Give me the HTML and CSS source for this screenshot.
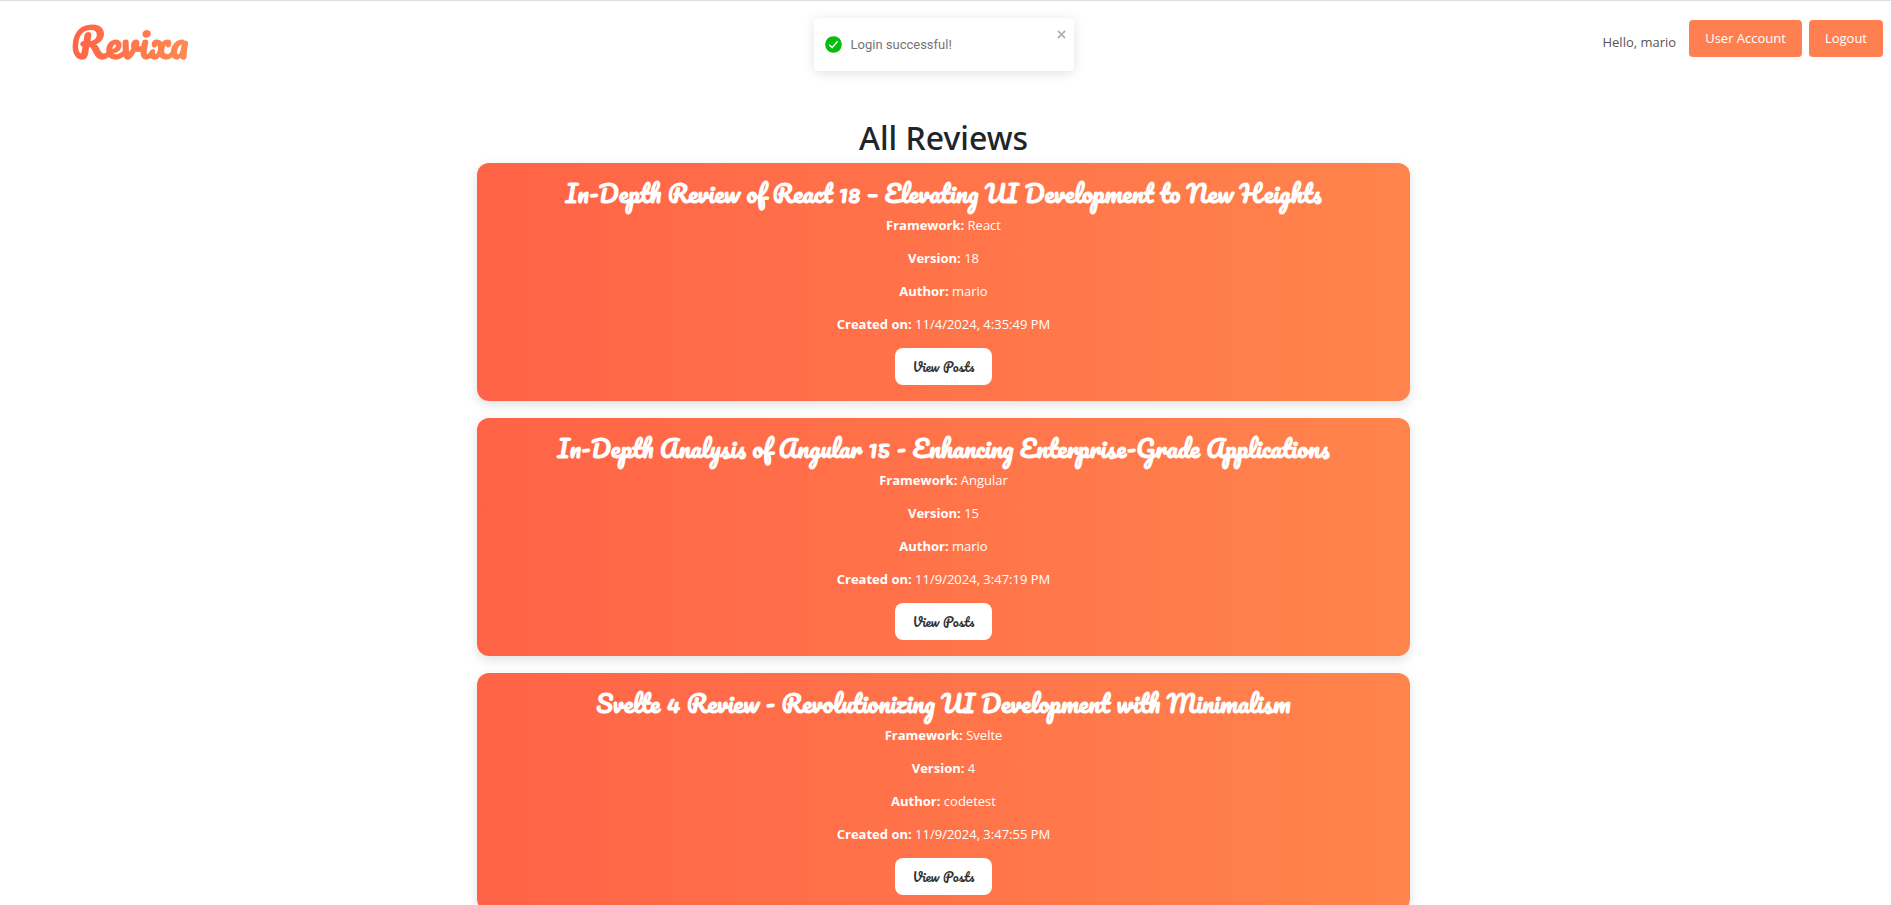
FILE: index.html
```html
<!DOCTYPE html>
<html lang="en">
<head>
  <meta charset="utf-8">
  <title>Revixa</title>
  <link rel="stylesheet" href="styles.css">
</head>
<body>
  <header class="topbar">
    <a class="brand" href="#">Revixa</a>
    <nav class="account">
      <span class="greeting">Hello, mario</span>
      <button class="btn" type="button">User Account</button>
      <button class="btn" type="button">Logout</button>
    </nav>
  </header>

  <div class="toast-layer">
    <div class="toast" role="status">
      <svg class="toast-icon" viewBox="0 0 18 18" aria-hidden="true">
        <circle cx="9" cy="9" r="8.8" fill="#07bc0c"/>
        <path d="M4.6 9.4 L7.6 12.2 L13.4 5.6" fill="none" stroke="#fff" stroke-width="1.5"/>
      </svg>
      <span class="toast-text">Login successful!</span>
      <button class="toast-close" type="button" aria-label="Close">
        <svg viewBox="0 0 10 10" aria-hidden="true"><path d="M1 1 L9 9 M9 1 L1 9" stroke="#b0b0b0" stroke-width="2"/></svg>
      </button>
    </div>
  </div>

  <main class="reviews">
    <h1 class="heading">All Reviews</h1>
    <article class="card">
      <h2 class="title">In-Depth Review of React 18 – Elevating UI Development to New Heights</h2>
      <p class="meta"><strong>Framework:</strong> React</p>
      <p class="meta"><strong>Version:</strong> 18</p>
      <p class="meta"><strong>Author:</strong> mario</p>
      <p class="meta"><strong>Created on:</strong> 11/4/2024, 4:35:49 PM</p>
      <button class="view" type="button">View Posts</button>
    </article>
    <article class="card">
      <h2 class="title">In-Depth Analysis of Angular 15 - Enhancing Enterprise-Grade Applications</h2>
      <p class="meta"><strong>Framework:</strong> Angular</p>
      <p class="meta"><strong>Version:</strong> 15</p>
      <p class="meta"><strong>Author:</strong> mario</p>
      <p class="meta"><strong>Created on:</strong> 11/9/2024, 3:47:19 PM</p>
      <button class="view" type="button">View Posts</button>
    </article>
    <article class="card">
      <h2 class="title">Svelte 4 Review - Revolutionizing UI Development with Minimalism</h2>
      <p class="meta"><strong>Framework:</strong> Svelte</p>
      <p class="meta"><strong>Version:</strong> 4</p>
      <p class="meta"><strong>Author:</strong> codetest</p>
      <p class="meta"><strong>Created on:</strong> 11/9/2024, 3:47:55 PM</p>
      <button class="view" type="button">View Posts</button>
    </article>
  </main>
</body>
</html>
```
FILE: styles.css
```css
* {
  box-sizing: border-box;
}

html {
  scrollbar-width: none;
}

body {
  margin: 0;
  border-top: 1px solid #dedede;
  background: #fff;
  color: #212529;
  font: 13px/21px "Segoe UI", "Open Sans", "Noto Sans", sans-serif;
}

.topbar {
  display: flex;
  align-items: flex-start;
  justify-content: space-between;
  height: 96px;
  padding: 19px 8px 0 71px;
}

.brand {
  padding-right: 6px;
  background: linear-gradient(to right, #ff6347, #ff8c50);
  background-clip: text;
  -webkit-background-clip: text;
  color: transparent;
  font: 700 40px/44px Pacifico, cursive;
  text-decoration: none;
}

.account {
  display: flex;
  align-items: center;
  gap: 7px;
}

.greeting {
  padding: 8px 6px 0 0;
  color: #555;
}

.btn {
  height: 37px;
  padding: 0 16px;
  border: 0;
  border-radius: 4px;
  background: #ff7f50;
  color: #fff;
  font: inherit;
}

.toast-layer {
  position: absolute;
  top: 18px;
  left: 0;
  right: 4px;
  display: flex;
  justify-content: center;
  pointer-events: none;
}

.toast {
  display: flex;
  align-items: center;
  gap: 9px;
  width: 260px;
  height: 53px;
  padding: 0 8px 0 11px;
  border-radius: 4px;
  background: #fff;
  box-shadow: 0 2px 12px rgba(0, 0, 0, 0.12);
  color: #757575;
  font: 13px/20px Roboto, sans-serif;
  pointer-events: auto;
}

.toast-icon {
  width: 17px;
  height: 17px;
}

.toast-text {
  flex: 1;
}

.toast-close {
  display: flex;
  align-self: flex-start;
  margin-top: 12px;
  padding: 0;
  border: 0;
  background: none;
}

.toast-close svg {
  width: 9px;
  height: 9px;
}

.reviews {
  display: flex;
  flex-direction: column;
  align-items: center;
  padding: 22px 14px 17px 10px;
  text-align: center;
}

.heading {
  margin: 0 0 6px;
  font: 500 32px/38px "Segoe UI", "Noto Sans", sans-serif;
}

.card {
  display: flex;
  flex-direction: column;
  align-items: center;
  width: 50%;
  margin-bottom: 17px;
  padding: 16px;
  border-radius: 12px;
  background: linear-gradient(to right, #ff6347, #ff844c);
  box-shadow: 0 4px 12px rgba(0, 0, 0, 0.12);
  color: #fff;
}

.title {
  margin: 0 0 8px;
  font: 700 24px/28px Pacifico, cursive;
}

.meta {
  margin: 0 0 12px;
}

.view {
  height: 37px;
  margin-top: 1px;
  padding: 0 18px;
  border: 0;
  border-radius: 8px;
  background: #fff;
  color: #333;
  font: 400 13px/21px Pacifico, cursive;
}
```
